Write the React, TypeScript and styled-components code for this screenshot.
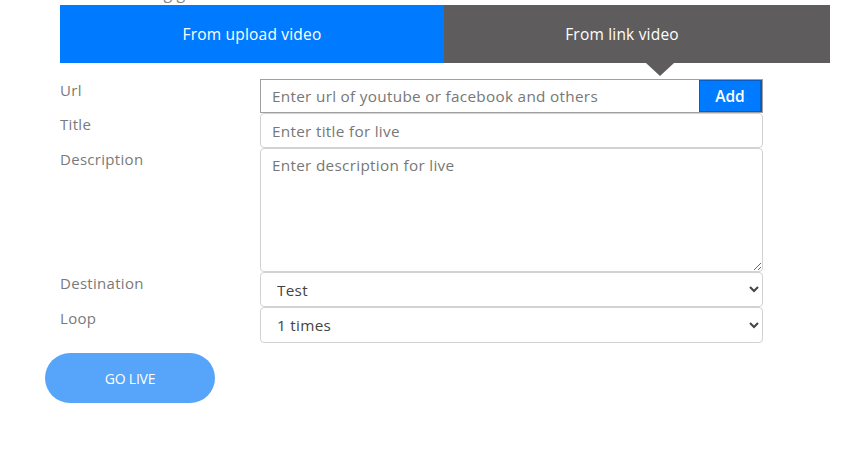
import React from "react";
import styled, { createGlobalStyle } from "styled-components";

const Global = createGlobalStyle`
  html, body { margin: 0; padding: 0; background: #fff; }
  body { font-family: "Open Sans", "Noto Sans", sans-serif; }
  * { box-sizing: border-box; }
`;

const Page = styled.div`
  width: 850px;
  height: 470px;
  padding: 5px 20px 0 60px;
  position: relative;
  overflow: hidden;
`;

const CutHeading = styled.div`
  position: absolute;
  top: -18px;
  left: 96px;
  font-size: 16px;
  line-height: 22px;
  color: #888;
`;

const Tabs = styled.div`
  display: grid;
  grid-template-columns: 384px 386px;
  width: 770px;
  height: 58px;
`;

const Tab = styled.div<{ $active?: boolean }>`
  display: flex;
  align-items: center;
  justify-content: center;
  color: #fff;
  font-size: 15.5px;
  letter-spacing: 0.2px;
  position: relative;
  padding-right: ${(p) => (p.$active ? "30px" : "0")};
  background: ${(p) => (p.$active ? "#5e5c5d" : "#007bff")};
  &::after {
    content: "";
    display: ${(p) => (p.$active ? "block" : "none")};
    position: absolute;
    left: 202px;
    bottom: -13px;
    border-left: 14px solid transparent;
    border-right: 14px solid transparent;
    border-top: 13px solid #5e5c5d;
  }
`;

const Form = styled.div`
  display: grid;
  grid-template-columns: 200px 503px;
  margin-top: 16px;
`;

const Label = styled.div`
  font-size: 15px;
  letter-spacing: 0.3px;
  color: #7a7a7a;
  padding-top: 1px;
  line-height: 20px;
`;

const UrlGroup = styled.div`
  display: flex;
  height: 34px;
  border: 1px solid #a0a0a0;
`;

const UrlInput = styled.input`
  flex: 1;
  border: none;
  outline: none;
  padding: 0 11px;
  font-size: 15.3px;
  letter-spacing: 0.3px;
  font-family: inherit;
  color: #555;
  &::placeholder { color: #777; }
`;

const AddButton = styled.button`
  width: 63px;
  border: 1px solid #0a5cc0;
  border-right-width: 2px;
  background: #007bff;
  color: #fff;
  font-family: inherit;
  font-size: 15.5px;
  font-weight: 600;
  padding: 0;
`;

const TextInput = styled.input`
  height: 35px;
  border: 1px solid #d2d2d2;
  border-radius: 4px;
  padding: 0 11px;
  font-size: 15.3px;
  letter-spacing: 0.3px;
  font-family: inherit;
  outline: none;
  &::placeholder { color: #777; }
`;

const TextArea = styled.textarea`
  height: 124px;
  border: 1px solid #d2d2d2;
  border-radius: 4px;
  padding: 6px 11px;
  font-size: 15.3px;
  letter-spacing: 0.3px;
  font-family: inherit;
  outline: none;
  resize: vertical;
  &::placeholder { color: #777; }
`;

const Select = styled.select<{ $h: number }>`
  height: ${(p) => p.$h}px;
  border: 1px solid #d2d2d2;
  border-radius: 4px;
  padding: 0 12px;
  font-size: 15.3px;
  letter-spacing: 0.3px;
  font-family: inherit;
  color: #444;
  background: #fff;
  outline: none;
`;

const GoLive = styled.button`
  margin: 10px 0 0 -15px;
  width: 170px;
  height: 50px;
  border: none;
  border-radius: 25px;
  background: #56a5fa;
  color: #fff;
  font-family: inherit;
  font-size: 14px;
  letter-spacing: -0.2px;
  display: block;
`;

export default function App() {
  return (
    <>
      <Global />
      <Page>
        <CutHeading>Streaming guide</CutHeading>
        <Tabs>
          <Tab>From upload video</Tab>
          <Tab $active>From link video</Tab>
        </Tabs>
        <Form>
          <Label>Url</Label>
          <UrlGroup>
            <UrlInput placeholder="Enter url of youtube or facebook and others" />
            <AddButton>Add</AddButton>
          </UrlGroup>
          <Label>Title</Label>
          <TextInput placeholder="Enter title for live" />
          <Label>Description</Label>
          <TextArea placeholder="Enter description for live" />
          <Label>Destination</Label>
          <Select $h={35} defaultValue="Test">
            <option>Test</option>
          </Select>
          <Label>Loop</Label>
          <Select $h={36} defaultValue="1 times">
            <option>1 times</option>
          </Select>
        </Form>
        <GoLive>GO LIVE</GoLive>
      </Page>
    </>
  );
}
